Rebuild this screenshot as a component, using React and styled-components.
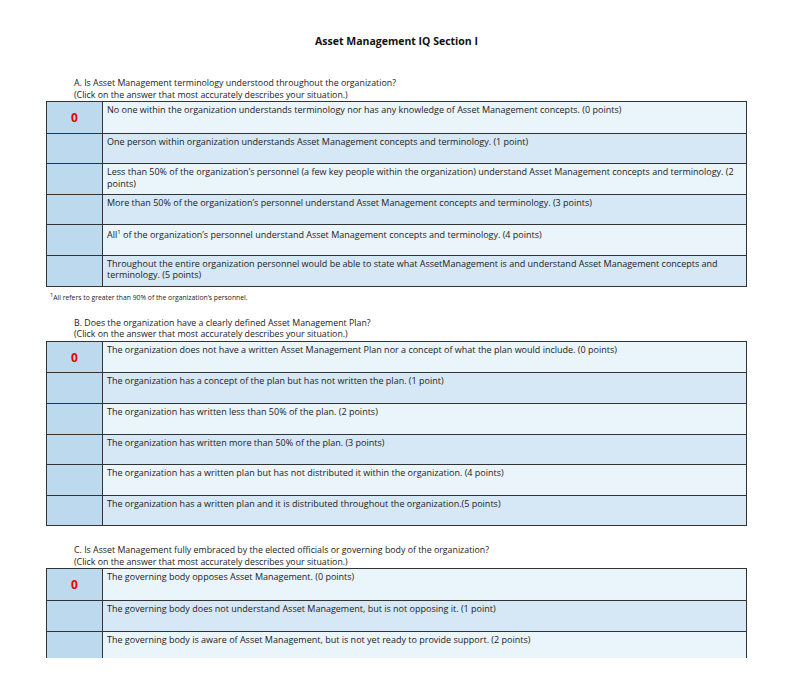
import React from "react";
import styled, { createGlobalStyle } from "styled-components";

const Global = createGlobalStyle`
  body { margin: 0; background: #fff; font-family: "Open Sans", "Noto Sans", sans-serif; color: #222; }
`;
const Page = styled.div`
  height: 658px; overflow: hidden; padding: 34px 0 0 46px; box-sizing: border-box; width: 800px;
`;
const Title = styled.h1`
  margin: 0 0 30px; font-size: 10.5px; font-weight: 700; text-align: center; width: 701px; color: #111;
`;
const Section = styled.div` margin-bottom: ${p => p.$mb}px; `;
const Q = styled.div`
  font-size: 8.8px; line-height: 11.5px; padding-left: 28px;
`;
const Table = styled.div`
  width: 701px; border: 1px solid #333; box-sizing: border-box;
  display: grid; grid-template-columns: 56px 1fr;
`;
const Score = styled.div`
  background: #bcd9ee; border-right: 1px solid #333; border-top: ${p => p.$first ? "none" : "1px solid #333"};
  height: 30.6px; box-sizing: border-box; color: #e00; font-weight: 700; font-size: 12px;
  text-align: center; padding-top: 7px;
`;
const Cell = styled.div`
  background: ${p => p.$alt ? "#d6e8f5" : "#eaf4fb"}; border-top: ${p => p.$first ? "none" : "1px solid #333"};
  height: 30.6px; box-sizing: border-box; padding: 2px 4px; font-size: 9px; line-height: 11.5px;
`;
const Note = styled.div` font-size: 6.8px; padding: 4px 0 0 4px; `;

const sections = [
  { q: "A. Is Asset Management terminology understood throughout the organization?", rows: [
    "No one within the organization understands terminology nor has any knowledge of Asset Management concepts. (0 points)",
    "One person within organization understands Asset Management concepts and terminology. (1 point)",
    "Less than 50% of the organization’s personnel (a few key people within the organization) understand Asset Management concepts and terminology. (2 points)",
    "More than 50% of the organization’s personnel understand Asset Management concepts and terminology. (3 points)",
    <>All<sup style={{fontSize:"6px"}}>1</sup> of the organization’s personnel understand Asset Management concepts and terminology. (4 points)</>,
    "Throughout the entire organization personnel would be able to state what AssetManagement is and understand Asset Management concepts and terminology. (5 points)",
  ], note: true, mb: 16 },
  { q: "B. Does the organization have a clearly defined Asset Management Plan?", rows: [
    "The organization does not have a written Asset Management Plan nor a concept of what the plan would include. (0 points)",
    "The organization has a concept of the plan but has not written the plan. (1 point)",
    "The organization has written less than 50% of the plan. (2 points)",
    "The organization has written more than 50% of the plan. (3 points)",
    "The organization has a written plan but has not distributed it within the organization. (4 points)",
    "The organization has a written plan and it is distributed throughout the organization.(5 points)",
  ], mb: 19 },
  { q: "C. Is Asset Management fully embraced by the elected officials or governing body of the organization?", rows: [
    "The governing body opposes Asset Management. (0 points)",
    "The governing body does not understand Asset Management, but is not opposing it. (1 point)",
    "The governing body is aware of Asset Management, but is not yet ready to provide support. (2 points)",
    "The governing body supports Asset Management and is willing to provide the funding necessary. (3 points)",
  ], mb: 0 },
];

export default function App() {
  return (
    <>
      <Global />
      <Page>
        <Title>Asset Management IQ Section I</Title>
        {sections.map((s, i) => (
          <Section key={i} $mb={s.mb}>
            <Q>{s.q}</Q>
            <Q>(Click on the answer that most accurately describes your situation.)</Q>
            <Table>
              {s.rows.map((r, j) => (
                <React.Fragment key={j}>
                  <Score $first={j === 0}>{j === 0 ? "0" : ""}</Score>
                  <Cell $first={j === 0} $alt={j % 2 === 1}>{r}</Cell>
                </React.Fragment>
              ))}
            </Table>
            {s.note && <Note><sup>1</sup>All refers to greater than 90% of the organization’s personnel.</Note>}
          </Section>
        ))}
      </Page>
    </>
  );
}
